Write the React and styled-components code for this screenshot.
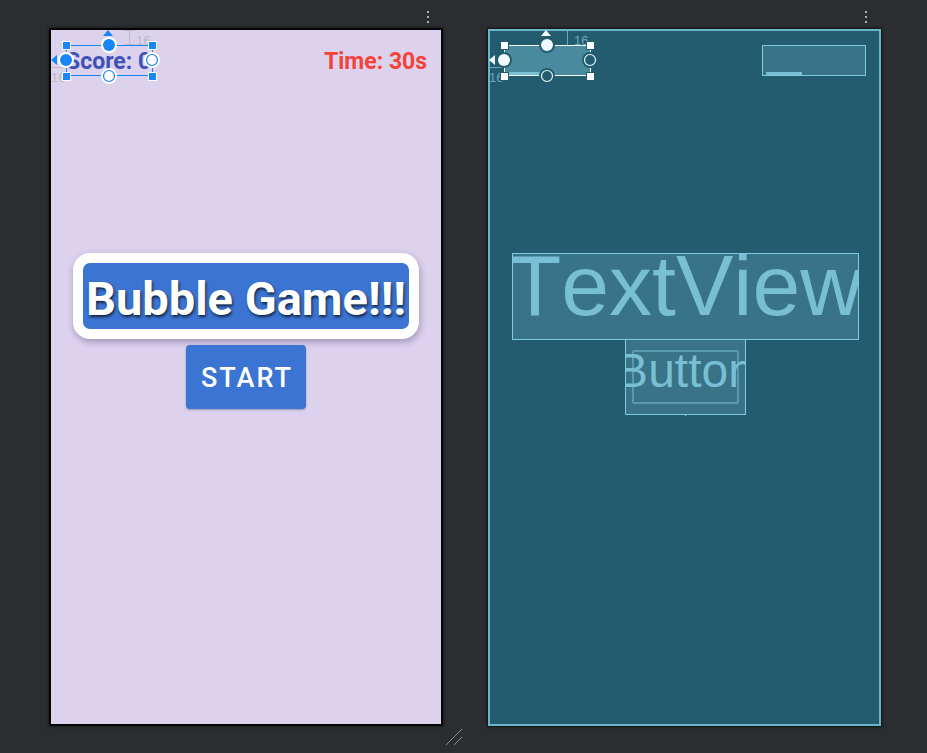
import React from "react";
import styled, { createGlobalStyle } from "styled-components";

const GlobalStyle = createGlobalStyle`
  * { box-sizing: border-box; }
  body { margin: 0; background: #2b2d30; }
`;

const Workspace = styled.main`
  display: flex;
  gap: 44px;
  min-height: 100vh;
  padding: 0 46px 0 49px;
  background: #2b2d30;
  font-family: Roboto, "Liberation Sans", sans-serif;
`;

const Pane = styled.section`
  position: relative;
  flex: 1;
  min-width: 0;
  display: flex;
  flex-direction: column;
  padding-bottom: 27px;
`;

const PaneBar = styled.div`
  display: flex;
  justify-content: flex-end;
  height: 28px;
  padding: 9px 7px 0 0;
`;

const MenuButton = styled.button`
  display: flex;
  width: 16px;
  height: 16px;
  padding: 0;
  border: 0;
  background: none;
  color: #afb1b5;
`;

const Screen = styled.div`
  flex: 1;
  display: flex;
  flex-direction: column;
  padding-top: 15px;
  border: 2px solid #060607;
  box-shadow: 0 0 3px #101012;
  background: #dcd2ee;
`;

const BlueprintScreen = styled(Screen)`
  margin: 1px 0 0 1px;
  padding-top: 14px;
  border-color: #6bb5c9;
  box-shadow: 0 0 2px 1px #101216;
  background: #235c6f;
`;

const HeaderRow = styled.header`
  display: flex;
  justify-content: space-between;
  padding: 0 13px 0 ${(p) => (p.$blueprint ? 14 : 15)}px;
`;

const ScoreBox = styled.div`
  position: relative;
  width: 87px;
  height: 31px;
`;

const ScoreText = styled.span`
  display: block;
  height: 31px;
  font-size: 23px;
  line-height: 34px;
  font-weight: 700;
  color: #3f51b5;
  white-space: nowrap;
`;

const TimeText = styled(ScoreText)`
  width: 104px;
  color: #f44336;
`;

const Overlay = styled.svg`
  position: absolute;
  left: -16px;
  top: -16px;
`;

const MarginLabel = styled.span`
  position: absolute;
  left: ${(p) => (p.$side === "top" ? 70 : -15)}px;
  top: ${(p) => (p.$side === "top" ? -10 : 27)}px;
  font: 13px/12px "Liberation Sans", Arial, sans-serif;
  color: ${(p) => p.$color};
`;

const Content = styled.div`
  display: flex;
  flex-direction: column;
  align-items: center;
  margin-top: 177px;
  padding-left: ${(p) => (p.$blueprint ? 2 : 0)}px;
`;

const Title = styled.h1`
  margin: 0;
  width: 346px;
  height: 86px;
  border: 10px solid #fff;
  border-radius: 17px;
  background: #3b74d2;
  box-shadow: 1px 3px 7px rgba(50, 35, 80, 0.35);
  color: #fff;
  font-size: 47px;
  line-height: 72px;
  font-weight: 700;
  text-align: center;
  white-space: nowrap;
  text-shadow: 1px 2px 3px rgba(0, 0, 0, 0.7);
`;

const StartButton = styled.button`
  margin-top: 6px;
  width: 120px;
  height: 64px;
  padding: 0 0 0 2px;
  border: 0;
  border-radius: 4px;
  background: #3b74d2;
  box-shadow: 0 1px 2px rgba(50, 35, 80, 0.35);
  color: #fff;
  font: 500 27px/66px Roboto, sans-serif;
  letter-spacing: 2px;
`;

const BlueprintBox = styled.div`
  display: flex;
  justify-content: center;
  overflow: hidden;
  border: 1px solid #7ccbe0;
  background: #387387;
  color: #78bfd4;
  font-family: "Liberation Sans", Arial, sans-serif;
  font-kerning: none;
  white-space: nowrap;
`;

const BlueprintScore = styled(BlueprintBox)`
  justify-content: flex-start;
  align-items: flex-end;
  height: 31px;
  padding-left: 3px;
  border-color: transparent;
  background: #4a8a9f;
  background-clip: padding-box;
`;

const BlueprintTime = styled(BlueprintScore)`
  width: 104px;
  border-color: #7ccbe0;
  background: #387387;
`;

const TextBar = styled.div`
  width: 36px;
  height: 3px;
  background: #78bfd4;
`;

const BlueprintTitle = styled(BlueprintBox)`
  width: 347px;
  height: 87px;
  font-size: 86px;
  line-height: 62px;
`;

const BlueprintButton = styled(BlueprintBox)`
  position: relative;
  width: 121px;
  height: 76px;
  margin-top: -1px;
  font-size: 48px;
  line-height: 62px;

  &::after {
    content: "";
    position: absolute;
    inset: 10px 6px;
    border: 2px solid rgba(120, 191, 212, 0.5);
    border-radius: 2px;
  }
`;

const BaselineTick = styled.div`
  width: 1px;
  height: 1px;
  background: #7ccbe0;
`;

const ResizeGrip = styled.svg`
  position: absolute;
  right: -20px;
  bottom: 7px;
`;

const designColors = {
  line: "#1886f7", square: "#1886f7", fill: "#1886f7", open: "#fafafa",
  halo: "#fff", ring: "#1886f7", mark: "#bdbac2",
};
const blueprintColors = {
  line: "#f4fbfd", square: "#fff", fill: "#f0f9fc", open: "#235c6f",
  halo: "#235c6f", ring: "#e8f6fa", mark: "#68aabd",
};

function Handle({ x, y, open, c }) {
  return (
    <>
      <circle cx={x} cy={y} r="8" fill={c.halo} />
      <circle cx={x} cy={y} r={open ? 5.5 : 6} fill={open ? c.open : c.fill}
        stroke={open ? c.ring : "none"} strokeWidth="1.2" />
    </>
  );
}

function Selection({ c }) {
  return (
    <>
      <MarginLabel $side="top" $color={c.mark}>16</MarginLabel>
      <MarginLabel $side="left" $color={c.mark}>16</MarginLabel>
      <Overlay width="112" height="66" viewBox="0 0 112 66" aria-hidden="true">
        <path d={c === designColors
          ? "M74 1.5H85M79.5 1.5V16M74 15.5H85M1 38.5H14"
          : "M79.5 1.5V16M1 38.5H14"} fill="none" stroke={c.mark} />
        <rect x="16.5" y="16.5" width="86" height="30" fill="none" stroke={c.line} />
        {[[16, 16], [102, 16], [16, 47], [102, 47]].map(([x, y]) => (
          <rect key={`${x}-${y}`} x={x - 3.5} y={y - 3.5} width="8" height="8"
            fill={c.square} stroke={c.halo} />
        ))}
        <path d="M58 1L63 7H53ZM1 31L7 26V36Z" fill={c.line} />
        <Handle x={59} y={16} c={c} />
        <Handle x={16} y={31} c={c} />
        <Handle x={102} y={31} c={c} open />
        <Handle x={59} y={47} c={c} open />
      </Overlay>
    </>
  );
}

function PaneMenu({ label }) {
  return (
    <PaneBar>
      <MenuButton type="button" aria-label={label}>
        <svg width="16" height="16" viewBox="0 0 16 16" fill="currentColor">
          <path d="M7 2h2v2H7zM7 7h2v2H7zM7 12h2v2H7z" />
        </svg>
      </MenuButton>
    </PaneBar>
  );
}

export default function App() {
  return (
    <>
      <GlobalStyle />
      <Workspace>
        <Pane>
          <PaneMenu label="Design options" />
          <Screen>
            <HeaderRow>
              <ScoreBox>
                <ScoreText>Score: 0</ScoreText>
                <Selection c={designColors} />
              </ScoreBox>
              <TimeText>Time: 30s</TimeText>
            </HeaderRow>
            <Content>
              <Title>Bubble Game!!!</Title>
              <StartButton type="button">START</StartButton>
            </Content>
          </Screen>
          <ResizeGrip width="18" height="18" viewBox="0 0 18 18" aria-hidden="true">
            <path d="M1 17L17 1M9 17L17 9" stroke="#8a8c90" fill="none" />
          </ResizeGrip>
        </Pane>
        <Pane>
          <PaneMenu label="Blueprint options" />
          <BlueprintScreen>
            <HeaderRow $blueprint>
              <ScoreBox>
                <BlueprintScore><TextBar /></BlueprintScore>
                <Selection c={blueprintColors} />
              </ScoreBox>
              <BlueprintTime><TextBar /></BlueprintTime>
            </HeaderRow>
            <Content $blueprint>
              <BlueprintTitle>TextView</BlueprintTitle>
              <BlueprintButton>Button</BlueprintButton>
              <BaselineTick />
            </Content>
          </BlueprintScreen>
        </Pane>
      </Workspace>
    </>
  );
}
